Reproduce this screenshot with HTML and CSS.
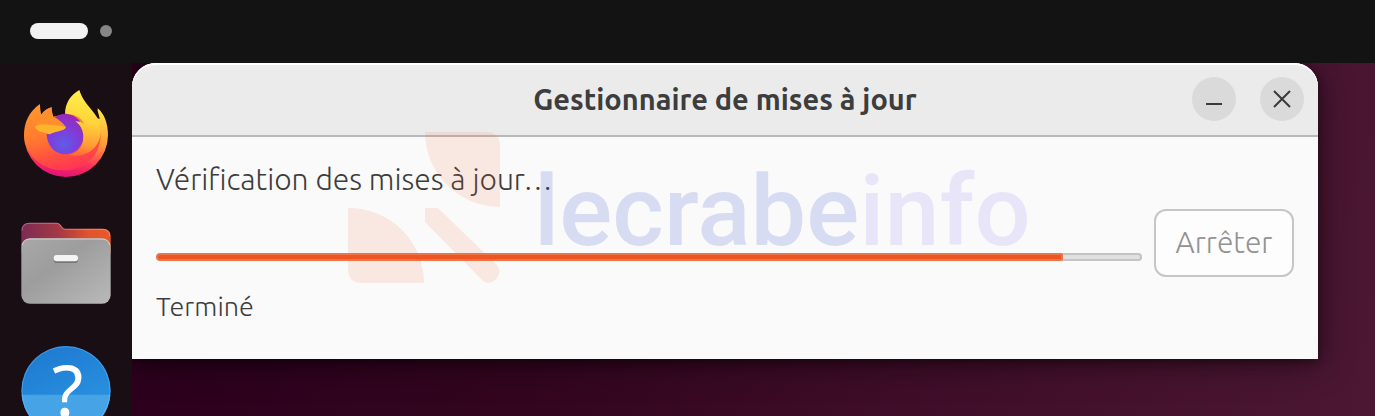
FILE: index.html
```html
<!DOCTYPE html>
<html lang="fr">
<head>
    <meta charset="UTF-8">
    <meta name="viewport" content="width=device-width, initial-scale=1.0">
    <title>Gestionnaire de mises à jour</title>
    <link rel="stylesheet" href="styles.css">
</head>
<body>
    <div class="topbar">
        <button class="workspace active" aria-label="Espace de travail 1"></button>
        <button class="workspace" aria-label="Espace de travail 2"></button>
    </div>
    <div class="screen">
        <nav class="dock">
            <a href="#" class="dock-icon" aria-label="Firefox">
                <svg viewBox="63 267 270 270">
                    <defs>
                        <linearGradient id="fox" x1="0.3" y1="0" x2="0.6" y2="1">
                            <stop offset="0" stop-color="#ff962c"/>
                            <stop offset="0.45" stop-color="#ff7a30"/>
                            <stop offset="0.75" stop-color="#ff5040"/>
                            <stop offset="1" stop-color="#ff3358"/>
                        </linearGradient>
                        <linearGradient id="tail" gradientUnits="userSpaceOnUse" x1="250" y1="275" x2="215" y2="490">
                            <stop offset="0" stop-color="#fff04a"/>
                            <stop offset="0.4" stop-color="#ffd53a"/>
                            <stop offset="0.7" stop-color="#ffa036"/>
                            <stop offset="0.88" stop-color="#ff6a3a"/>
                            <stop offset="1" stop-color="#ff4a45"/>
                        </linearGradient>
                        <linearGradient id="side" x1="0.6" y1="0" x2="0.4" y2="1">
                            <stop offset="0" stop-color="#ffe045"/>
                            <stop offset="0.45" stop-color="#ff9a3a"/>
                            <stop offset="0.8" stop-color="#f92c5a"/>
                            <stop offset="1" stop-color="#e3107a"/>
                        </linearGradient>
                        <radialGradient id="globe" cx="0.45" cy="0.75" r="0.75">
                            <stop offset="0" stop-color="#5f5be8"/>
                            <stop offset="0.45" stop-color="#7a41dc"/>
                            <stop offset="1" stop-color="#9a27b8"/>
                        </radialGradient>
                    </defs>
                    <path fill="url(#side)" d="M72 405A126 126 0 0 0 324 405C324 370 312 340 293 325C291 335 298 345 299 357L250 340L80 380Z"/>
                    <path fill="url(#fox)" d="M120 312C86 335 72 370 72 405C74 465 125 510 190 511C255 512 302 465 302 405C302 370 280 340 250 330L160 350C157 340 155 332 155 322C143 325 132 332 124 345C121 332 120 322 120 312Z"/>
                    <ellipse cx="196" cy="402" rx="56" ry="61" fill="url(#globe)"/>
                    <path fill="url(#tail)" d="M238 270C212 285 196 308 195 341C222 341 244 352 252 371C244 366 236 364 226 364C247 378 254 404 248 428C241 450 224 461 205 464C252 478 302 445 302 395C304 340 253 322 238 270Z"/>
                    <path fill="#ff8f2c" d="M122 345C132 332 143 325 155 322C154 334 156 343 160 350C173 354 190 371 197 380C196 392 163 394 148 403L105 385Z"/>
                    <path fill="#ffb42e" d="M104 380C122 368 165 376 197 380C199 393 164 392 148 403C135 397 112 397 104 380Z"/>
                </svg>
            </a>
            <a href="#" class="dock-icon" aria-label="Fichiers">
                <svg viewBox="63 51 270 270">
                    <defs>
                        <linearGradient id="folder-back">
                            <stop offset="0" stop-color="#7d2b55"/>
                            <stop offset="0.4" stop-color="#a23846"/>
                            <stop offset="0.75" stop-color="#e2522c"/>
                            <stop offset="1" stop-color="#ea5a2a"/>
                        </linearGradient>
                        <linearGradient id="folder-front" x1="0" y1="0" x2="1" y2="1">
                            <stop offset="0" stop-color="#a8a8a8"/>
                            <stop offset="0.4" stop-color="#9d9d9d"/>
                            <stop offset="1" stop-color="#b9b9b9"/>
                        </linearGradient>
                    </defs>
                    <path fill="url(#folder-back)" d="M64 160V92Q64 68 88 68H170Q177 68 181 73L189 83Q192 86 197 86H308Q332 86 332 110V160Z"/>
                    <path fill="none" stroke="#fff" stroke-opacity="0.3" stroke-width="3" d="M66 92Q67 70 88 70H170Q176 70 180 75L188 85Q191 88 197 88H308Q328 88 330 108"/>
                    <rect x="64" y="115" width="268" height="196" rx="26" fill="url(#folder-front)"/>
                    <path fill="none" stroke="#d2d2d2" stroke-width="3" d="M67 136Q70 117 90 117H306Q326 117 329 136"/>
                    <rect x="161" y="169" width="73" height="20" rx="10" fill="#777"/>
                    <rect x="161" y="165" width="73" height="19" rx="9" fill="#f4f4f4"/>
                </svg>
            </a>
            <a href="#" class="dock-icon" aria-label="Aide">
                <svg viewBox="63 435 270 270">
                    <defs>
                        <clipPath id="help-half"><rect x="63" y="584" width="270" height="130"/></clipPath>
                        <linearGradient id="help-top" x1="0" y1="0" x2="0.4" y2="1">
                            <stop offset="0" stop-color="#1d78cf"/>
                            <stop offset="1" stop-color="#2b95e2"/>
                        </linearGradient>
                    </defs>
                    <circle cx="198" cy="572" r="134" fill="url(#help-top)"/>
                    <circle cx="198" cy="572" r="134" fill="#46a4e6" clip-path="url(#help-half)"/>
                    <circle cx="198" cy="572" r="132" fill="none" stroke="#7fc0f2" stroke-opacity="0.4" stroke-width="3"/>
                    <text class="help-mark" x="203" y="650" text-anchor="middle">?</text>
                </svg>
            </a>
        </nav>
        <main class="desktop">
            <section class="window">
                <header class="titlebar">
                    <h1 class="title">Gestionnaire de mises à jour</h1>
                    <div class="window-buttons">
                        <button class="window-button" aria-label="Réduire">
                            <svg viewBox="0 0 44 44"><path d="M14 27H30"/></svg>
                        </button>
                        <button class="window-button" aria-label="Fermer">
                            <svg viewBox="0 0 44 44"><path d="M14 14L30 30M30 14L14 30"/></svg>
                        </button>
                    </div>
                </header>
                <div class="content">
                    <label class="status" for="update-progress">Vérification des mises à jour…</label>
                    <div class="progress-row">
                        <progress class="progress" id="update-progress" value="92" max="100"></progress>
                        <button class="stop-button" disabled>Arrêter</button>
                    </div>
                    <p class="detail">Terminé</p>
                </div>
                <!-- Watermark over the window -->
                <div class="watermark">
                    <svg class="watermark-logo" viewBox="0 0 152 152">
                        <path d="M77 0H138Q152 0 152 14V75A75 75 0 0 1 77 0Z"/>
                        <path d="M0 76A75 75 0 0 1 76 151H14Q0 151 0 137Z"/>
                        <path d="M77 76H90L149 133Q153 138 151 142Q148 150 140 151Q137 151 134 148L77 90Z"/>
                    </svg>
                    <span class="watermark-text">lecrabe<span class="watermark-info">info</span></span>
                </div>
            </section>
        </main>
    </div>
</body>
</html>
```

FILE: styles.css
```css
* {
    box-sizing: border-box;
}
body {
    display: flex;
    flex-direction: column;
    height: 100vh;
    margin: 0;
    overflow: hidden;
    background: #131313;
    font-family: Ubuntu, "Open Sans", "Noto Sans", sans-serif;
    color: #3d3d3d;
}
button {
    padding: 0;
    border: 0;
    font-family: inherit;
}
svg {
    display: block;
}
.topbar {
    display: flex;
    align-items: center;
    gap: 12px;
    flex: none;
    height: 63px;
    padding: 0 30px 2px;
    background: #131313;
}
.workspace {
    width: 12px;
    height: 12px;
    border-radius: 6px;
    background: #868686;
}
.workspace.active {
    width: 58px;
    height: 16px;
    border-radius: 8px;
    background: #f2f2f2;
}
.screen {
    display: flex;
    flex: 1;
    min-height: 0;
}
.dock {
    display: flex;
    flex-direction: column;
    align-items: center;
    gap: 38px;
    flex: none;
    width: 132px;
    padding-top: 26px;
    overflow: hidden;
    background: #1a0e15;
}
.dock-icon {
    flex: none;
    width: 90px;
    height: 90px;
}
.help-mark {
    font-family: "Noto Sans", sans-serif;
    font-size: 216px;
    fill: #fff;
}
.desktop {
    flex: 1;
    padding-right: 57px;
    overflow: hidden;
    background: linear-gradient(100deg, #2b001d 0%, #33051f 35%, #43102c 75%, #4b1733 100%);
}
.window {
    position: relative;
    border-radius: 24px 24px 0 0;
    background: #fafafa;
    box-shadow: 0 4px 32px rgba(0, 0, 0, 0.5), 0 2px 8px rgba(0, 0, 0, 0.4);
}
.titlebar {
    display: grid;
    grid-template-columns: 1fr auto 1fr;
    align-items: center;
    height: 74px;
    padding: 0 14px;
    border-bottom: 2px solid #b9b9b9;
    border-radius: 24px 24px 0 0;
    background: #ebebeb;
    box-shadow: inset 0 2px #fff;
}
.title {
    grid-column: 2;
    margin: 0;
    font-size: 29px;
    font-weight: 600;
    line-height: 36px;
}
.window-buttons {
    display: flex;
    justify-content: flex-end;
    gap: 24px;
}
.window-button {
    width: 44px;
    height: 44px;
    border-radius: 50%;
    background: #dadada;
}
.window-button path {
    fill: none;
    stroke: #3a3a3a;
    stroke-width: 2;
}
.content {
    display: flex;
    flex-direction: column;
    gap: 12px;
    padding: 24px 24px 34px;
}
.status {
    font-size: 30px;
    font-weight: 300;
    line-height: 36px;
}
.progress-row {
    display: flex;
    align-items: flex-end;
    gap: 12px;
}
.progress {
    flex: 1;
    min-width: 0;
    height: 8px;
    margin-bottom: 16px;
    border: 0;
    appearance: none;
}
.progress::-webkit-progress-bar {
    border-radius: 4px;
    background: #e0e0e0;
    box-shadow: inset 0 0 0 2px #c4c4c4;
    overflow: hidden;
}
.progress::-webkit-progress-value {
    border: 2px solid #ea7649;
    border-radius: 4px 2px 2px 4px;
    background: #ee5522;
}
.stop-button {
    width: 140px;
    height: 68px;
    padding-bottom: 2px;
    border: 2px solid #c6c6c6;
    border-radius: 12px;
    background: #fdfdfd;
    color: #929292;
    font-size: 30px;
    font-weight: 300;
}
.detail {
    margin: 0;
    font-size: 27px;
    font-weight: 300;
    line-height: 34px;
}
.content .detail {
    padding-bottom: 2px;
}
.watermark {
    position: absolute;
    top: 69px;
    left: 216px;
    display: flex;
    align-items: center;
    gap: 34px;
    pointer-events: none;
}
.watermark-logo {
    width: 152px;
    height: 152px;
    fill: rgba(250, 90, 40, 0.11);
}
.watermark-text {
    padding-top: 6px;
    font-family: Roboto, sans-serif;
    font-size: 99px;
    font-weight: 500;
    line-height: 146px;
    color: rgba(40, 70, 210, 0.16);
}
.watermark-info {
    color: rgba(110, 80, 250, 0.12);
}
```
